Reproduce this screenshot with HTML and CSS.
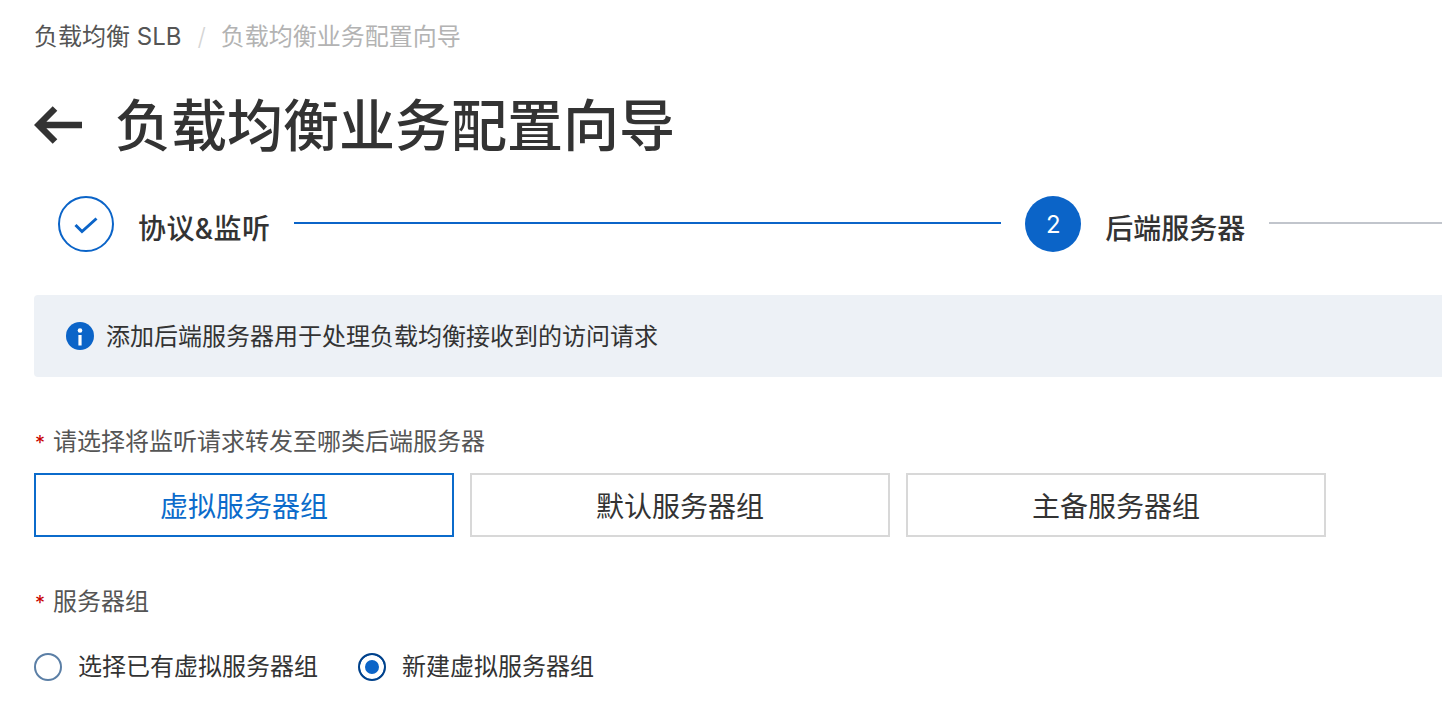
FILE: index.html
```html
<!DOCTYPE html>
<html lang="zh-CN">
<head>
  <meta charset="UTF-8">
  <title>负载均衡业务配置向导</title>
  <link rel="stylesheet" href="styles.css">
</head>
<body>
  <div class="page">
    <!-- 面包屑 -->
    <div class="breadcrumb">
      <span class="crumb">负载均衡 SLB</span>
      <span class="crumb-sep">/</span>
      <span class="crumb crumb-current">负载均衡业务配置向导</span>
    </div>

    <!-- 标题 -->
    <div class="title-row">
      <svg class="back-icon" width="48" height="40" viewBox="0 0 48 40">
        <path d="M21 2.5 L4.6 19 L21 35.5 M4.6 19 H48" fill="none" stroke="#333" stroke-width="6.5"/>
      </svg>
      <h1>负载均衡业务配置向导</h1>
    </div>

    <!-- 步骤条 -->
    <div class="steps">
      <div class="step-dot step-done">
        <svg width="24" height="20" viewBox="0 0 24 20">
          <path d="M1.5 11 L8 17.5 L22.5 4.5" fill="none" stroke="#0b64c8" stroke-width="3"/>
        </svg>
      </div>
      <div class="step-title step-title-first">协议&amp;监听</div>
      <div class="step-line step-line-done"></div>
      <div class="step-dot step-active">2</div>
      <div class="step-title">后端服务器</div>
      <div class="step-line step-line-rest"></div>
    </div>

    <!-- 提示 -->
    <div class="notice">
      <svg class="notice-icon" width="28" height="28" viewBox="0 0 28 28">
        <circle cx="14" cy="14" r="14" fill="#0b64c8"/>
        <circle cx="14" cy="8.5" r="2.3" fill="#fff"/>
        <rect x="12.4" y="13" width="3.2" height="10.5" fill="#fff"/>
      </svg>
      <span class="notice-text">添加后端服务器用于处理负载均衡接收到的访问请求</span>
    </div>

    <!-- 表单 -->
    <div class="field-label field-label-first"><span class="required">*</span>请选择将监听请求转发至哪类后端服务器</div>
    <div class="cards">
      <div class="card card-active">虚拟服务器组</div>
      <div class="card">默认服务器组</div>
      <div class="card">主备服务器组</div>
    </div>

    <div class="field-label field-label-second"><span class="required">*</span>服务器组</div>
    <div class="radios">
      <label class="radio"><span class="radio-dot"></span>选择已有虚拟服务器组</label>
      <label class="radio"><span class="radio-dot radio-dot-on"></span>新建虚拟服务器组</label>
    </div>
  </div>
</body>
</html>
```

FILE: styles.css
```css
/* 全局 */
html, body {
  margin: 0;
  padding: 0;
  background: #fff;
}

body {
  height: 716px;
  overflow: hidden;
  font-family: "Inter", "Noto Sans CJK SC", sans-serif;
  color: #333;
}

.page {
  padding: 20px 0 0 34px;
}

/* 面包屑 */
.breadcrumb {
  display: flex;
  align-items: center;
  height: 34px;
  font-size: 24px;
  line-height: 34px;
  color: #555;
}

.crumb-sep {
  margin: 0 15px 0 16px;
  color: #d5d5d5;
  font-weight: 300;
}

.crumb-current {
  color: #b3b3b3;
}

/* 标题 */
.title-row {
  display: flex;
  align-items: center;
  height: 84px;
  margin-top: 30px;
}

.back-icon {
  flex: none;
  margin-right: 33px;
}

h1 {
  margin: 0;
  font-size: 56px;
  font-weight: 500;
  line-height: 84px;
  color: #333;
}

/* 步骤条 */
.steps {
  display: flex;
  align-items: center;
  height: 56px;
  margin: 28px 0 0 24px;
}

.step-dot {
  flex: none;
  display: flex;
  align-items: center;
  justify-content: center;
  box-sizing: border-box;
  width: 56px;
  height: 56px;
  border-radius: 50%;
}

.step-done {
  border: 2px solid #0b64c8;
}

.step-active {
  background: #0b64c8;
  color: #fff;
  font-size: 24px;
}

.step-title {
  flex: none;
  margin: 10px 24px 0 24px;
  font-size: 28px;
  font-weight: 500;
  line-height: 40px;
  color: #333;
}

.step-title-first {
  letter-spacing: 0.4px;
}

.step-line {
  height: 2px;
  margin-top: -2px;
  background: #c1c5cc;
}

.step-line-done {
  flex: none;
  width: 707px;
  margin-right: 24px;
  background: #0b64c8;
}

.step-line-rest {
  flex: 1;
}

/* 提示 */
.notice {
  display: flex;
  align-items: center;
  height: 82px;
  margin-top: 43px;
  padding-left: 32px;
  background: #edf1f6;
  border-radius: 4px 0 0 4px;
  font-size: 24px;
}

.notice-icon {
  flex: none;
  margin-right: 12px;
}

.notice-text {
  margin-top: -4px;
}

/* 表单 */
.field-label {
  height: 36px;
  font-size: 24px;
  line-height: 36px;
  color: #555;
}

.field-label-first {
  margin-top: 47px;
}

.field-label-second {
  margin-top: 47px;
}

.required {
  display: inline-block;
  width: 20px;
  padding-left: 1px;
  margin-right: -2px;
  font-size: 20px;
  color: #c80000;
}

.cards {
  display: flex;
  gap: 16px;
  margin-top: 13px;
}

.card {
  display: flex;
  align-items: center;
  justify-content: center;
  box-sizing: border-box;
  width: 420px;
  height: 64px;
  border: 2px solid #d8d8d8;
  font-size: 28px;
  color: #333;
}

.card-active {
  border-color: #0b6bcb;
  color: #0b6bcb;
}

.radios {
  display: flex;
  gap: 40px;
  margin-top: 29px;
}

.radio {
  display: flex;
  align-items: center;
  gap: 16px;
  font-size: 24px;
  line-height: 36px;
}

.radio-dot {
  flex: none;
  box-sizing: border-box;
  width: 28px;
  height: 28px;
  border: 2px solid #5b7fa6;
  border-radius: 50%;
  background: #fff;
}

.radio-dot-on {
  border-color: #00418a;
  background: #0b64c8;
  box-shadow: inset 0 0 0 5px #fff;
}
```
